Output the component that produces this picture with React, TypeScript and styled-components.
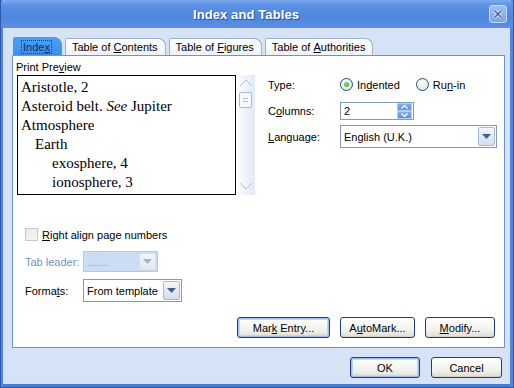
import React from "react";
import styled, { createGlobalStyle } from "styled-components";

const Global = createGlobalStyle`
  html, body { margin: 0; padding: 0; background: #fff; }
  body { font-family: "Liberation Sans", Arial, sans-serif; font-size: 11px; color: #000; }
`;

const Window = styled.div`
  width: 514px;
  height: 388px;
  box-sizing: border-box;
  display: flex;
  flex-direction: column;
  background: #d6e3f7;
  border: 1px solid #2a58b0;
  border-top: none;
  box-shadow: inset 2px 0 0 #5585d8, inset -3px 0 0 #5585d8, inset 0 -3px 0 #4a7bd0;
  overflow: hidden;
`;

const TitleBar = styled.div`
  height: 28px;
  flex: none;
  margin: 0 -1px;
  padding-right: 22px;
  display: flex;
  align-items: center;
  justify-content: center;
  position: relative;
  background: linear-gradient(#7aa8ec 0%, #5a91e6 20%, #4f86df 60%, #5b8fe2 100%);
  border-radius: 6px 6px 0 0;
  color: #fff;
  font-weight: bold;
  font-size: 13px;
  text-shadow: 1px 1px 0 #2c4f94;
  letter-spacing: 0.1px;
`;

const CloseBtn = styled.div`
  position: absolute;
  right: 7px;
  top: 5px;
  width: 18px;
  height: 18px;
  box-sizing: border-box;
  border: 1px solid #c7d9f5;
  border-radius: 3px;
  background: linear-gradient(#9dbff0, #7aa5e6);
  display: flex;
  align-items: center;
  justify-content: center;
`;

const Body = styled.div`
  flex: 1;
  display: flex;
  flex-direction: column;
  padding: 9px 10px 0 11px;
`;

const TabStrip = styled.div`
  display: flex;
  align-items: flex-end;
  height: 18px;
  padding-left: 1px;
  gap: 3px;
`;

const Tab = styled.div<{ $active?: boolean }>`
  height: ${(p) => (p.$active ? "18px" : "17px")};
  box-sizing: border-box;
  padding: 0 ${(p) => (p.$active ? "10px" : "7px")} 0 ${(p) => (p.$active ? "8px" : "6px")};
  display: flex;
  align-items: center;
  border: 1px solid ${(p) => (p.$active ? "#6d8fc5" : "#9bb0d0")};
  border-bottom: none;
  border-radius: 2px 8px 0 0;
  background: ${(p) =>
    p.$active ? "linear-gradient(#4aa0f4, #3a8ee9)" : "linear-gradient(#ffffff, #eef3fb)"};
  color: ${(p) => (p.$active ? "#0d2a6e" : "#000")};
  white-space: nowrap;
`;

const FocusText = styled.span`
  outline: 1px dotted #1d3c80;
  padding: 0 1px;
`;

const U = styled.span`
  text-decoration: underline;
`;

const Panel = styled.div`
  width: 493px;
  height: 293px;
  box-sizing: border-box;
  background: #fff;
  border: 1px solid #6f92c8;
  display: flex;
  flex-direction: column;
  padding: 5px 0 0 3px;
`;

const TopRow = styled.div`
  display: flex;
`;

const PreviewCol = styled.div`
  display: flex;
  flex-direction: column;
  gap: 2px;
`;

const PreviewBox = styled.div`
  display: flex;
  margin-left: 1px;
`;

const PreviewText = styled.div`
  width: 219px;
  height: 120px;
  box-sizing: border-box;
  border: 1px solid #000;
  font-family: "Liberation Serif", "Times New Roman", serif;
  font-size: 15px;
  line-height: 19px;
  padding: 2px 0 0 3px;
  overflow: hidden;
`;

const Entry = styled.div<{ $indent: number }>`
  padding-left: ${(p) => p.$indent}px;
  white-space: nowrap;
`;

const Scroll = styled.div`
  width: 19px;
  height: 120px;
  background: linear-gradient(90deg, #fdfdfe, #eef1f8 60%, #e2e8f5);
  display: flex;
  flex-direction: column;
  align-items: center;
  padding: 4px 0 5px;
  box-sizing: border-box;
`;

const Thumb = styled.div`
  width: 11px;
  height: 14px;
  border: 1px solid #a9b8d6;
  border-radius: 2px;
  background: #f6f8fc;
  display: flex;
  flex-direction: column;
  align-items: center;
  justify-content: center;
  gap: 2px;
  margin-top: 5px;
`;

const Spacer = styled.div`
  flex: 1;
`;

const Grip = styled.div`
  width: 5px;
  height: 1px;
  background: #a9b8d6;
`;

const Options = styled.div`
  display: flex;
  flex-direction: column;
  margin-left: 13px;
  padding-top: 13px;
  gap: 5px;
`;

const OptRow = styled.div`
  display: flex;
  align-items: center;
  height: 21px;
`;

const OptLabel = styled.div`
  width: 72px;
`;

const Radio = styled.div<{ $checked?: boolean }>`
  width: 13px;
  height: 13px;
  box-sizing: border-box;
  border-radius: 50%;
  border: 1px solid #1c5180;
  background: radial-gradient(circle at 35% 35%, #ffffff, #dcdcd5);
  display: flex;
  align-items: center;
  justify-content: center;
  &::after {
    content: "";
    display: ${(p) => (p.$checked ? "block" : "none")};
    width: 5px;
    height: 5px;
    border-radius: 50%;
    background: radial-gradient(circle at 40% 40%, #8ae28a, #22a322);
  }
`;

const RadioItem = styled.div<{ $gap: number }>`
  display: flex;
  align-items: center;
  gap: 4px;
  margin-right: ${(p) => p.$gap}px;
`;

const TextField = styled.div<{ $w: number; $h?: number; $disabled?: boolean }>`
  width: ${(p) => p.$w}px;
  height: ${(p) => p.$h ?? 18}px;
  box-sizing: border-box;
  border: 1px solid ${(p) => (p.$disabled ? "#b8c8e0" : "#7f9db9")};
  background: ${(p) => (p.$disabled ? "#cbdcf3" : "#fff")};
  color: ${(p) => (p.$disabled ? "#8aa0c0" : "#000")};
  display: flex;
  align-items: center;
  padding-left: 3px;
  padding-right: 1px;
`;

const Grow = styled.div`
  flex: 1;
  white-space: nowrap;
`;

const Spinner = styled.div`
  width: 15px;
  height: 16px;
  display: flex;
  flex-direction: column;
`;

const SpinHalf = styled.div`
  flex: 1;
  background: linear-gradient(#82adee, #5f92e2);
  border: 1px solid #b7cdf0;
  display: flex;
  align-items: center;
  justify-content: center;
`;

const DropBtn = styled.div<{ $disabled?: boolean }>`
  width: 17px;
  height: ${(p) => (p.$disabled ? 17 : 19)}px;
  box-sizing: border-box;
  border: 1px solid ${(p) => (p.$disabled ? "#d8e0ec" : "#a9bad6")};
  border-radius: 2px;
  background: ${(p) =>
    p.$disabled ? "linear-gradient(#f3f5f9, #e3e8f0)" : "linear-gradient(#f4f6fb, #d5deed)"};
  display: flex;
  align-items: center;
  justify-content: center;
`;

const Lower = styled.div`
  display: flex;
  flex-direction: column;
  padding-left: 9px;
  margin-top: 30px;
`;

const CheckRow = styled.div`
  display: flex;
  align-items: center;
  gap: 4px;
  height: 19px;
`;

const CheckBox = styled.div`
  width: 13px;
  height: 13px;
  box-sizing: border-box;
  border: 1px solid #c4c9d3;
  background: linear-gradient(135deg, #e6e8ec, #f8f8f8);
`;

const FieldRow = styled.div<{ $disabled?: boolean; $mt: number }>`
  display: flex;
  align-items: center;
  margin-top: ${(p) => p.$mt}px;
  color: ${(p) => (p.$disabled ? "#6f93c4" : "#000")};
`;

const FieldLabel = styled.div`
  width: 58px;
`;

const ButtonRow = styled.div`
  display: flex;
  justify-content: flex-end;
  gap: 10px;
  padding-right: 9px;
  margin-top: auto;
  margin-bottom: 9px;
`;

const Button = styled.div<{ $w: number; $focus?: boolean }>`
  width: ${(p) => p.$w}px;
  height: 21px;
  box-sizing: border-box;
  border: 1px solid #1c3f7a;
  border-radius: 3px;
  background: linear-gradient(#ffffff, #f0f0ea 70%, #dcdcd4);
  box-shadow: ${(p) =>
    p.$focus ? "inset 0 0 0 1px #9ebdf2, inset 0 0 0 2px #c4d6f6" : "inset 0 -1px 0 #d6d0c4"};
  display: flex;
  align-items: center;
  justify-content: center;
  white-space: nowrap;
`;

const Footer = styled.div`
  display: flex;
  justify-content: flex-end;
  gap: 11px;
  padding: 9px 1px 0 0;
`;

const DownTri = ({ color = "#3f5f96" }: { color?: string }) => (
  <svg width="9" height="5" viewBox="0 0 9 5">
    <path d="M0 0 H9 L4.5 5 Z" fill={color} />
  </svg>
);

const Chevron = ({ up }: { up?: boolean }) => (
  <svg width="7" height="4" viewBox="0 0 7 4">
    <path d={up ? "M0.5 3.5 L3.5 0.5 L6.5 3.5" : "M0.5 0.5 L3.5 3.5 L6.5 0.5"} stroke="#fff" strokeWidth="1.3" fill="none" />
  </svg>
);

const ScrollArrow = ({ up }: { up?: boolean }) => (
  <svg width="14" height="8" viewBox="0 0 14 8">
    <path d={up ? "M1 7 L7 1 L13 7" : "M1 1 L7 7 L13 1"} stroke="#b5c0d6" strokeWidth="1" fill="none" />
  </svg>
);

export default function App() {
  return (
    <>
      <Global />
      <Window>
        <TitleBar>
          Index and Tables
          <CloseBtn>
            <svg width="10" height="10" viewBox="0 0 10 10">
              <path d="M1.5 1.5 L8.5 8.5 M8.5 1.5 L1.5 8.5" stroke="#fff" strokeWidth="3" />
              <path d="M1.5 1.5 L8.5 8.5 M8.5 1.5 L1.5 8.5" stroke="#3b5f9e" strokeWidth="1.6" />
            </svg>
          </CloseBtn>
        </TitleBar>
        <Body>
          <TabStrip>
            <Tab $active>
              <FocusText>
                Inde<U>x</U>
              </FocusText>
            </Tab>
            <Tab>
              Table of&nbsp;<U>C</U>ontents
            </Tab>
            <Tab>
              Table of&nbsp;<U>F</U>igures
            </Tab>
            <Tab>
              Table of&nbsp;<U>A</U>uthorities
            </Tab>
          </TabStrip>
          <Panel>
            <TopRow>
              <PreviewCol>
                <div>
                  Print Pre<U>v</U>iew
                </div>
                <PreviewBox>
                  <PreviewText>
                    <Entry $indent={0}>Aristotle, 2</Entry>
                    <Entry $indent={0}>
                      Asteroid belt. <i>See</i> Jupiter
                    </Entry>
                    <Entry $indent={0}>Atmosphere</Entry>
                    <Entry $indent={14}>Earth</Entry>
                    <Entry $indent={31}>exosphere, 4</Entry>
                    <Entry $indent={31}>ionosphere, 3</Entry>
                  </PreviewText>
                  <Scroll>
                    <ScrollArrow up />
                    <Thumb>
                      <Grip />
                      <Grip />
                    </Thumb>
                    <Spacer />
                    <ScrollArrow />
                  </Scroll>
                </PreviewBox>
              </PreviewCol>
              <Options>
                <OptRow>
                  <OptLabel>Type:</OptLabel>
                  <RadioItem $gap={16}>
                    <Radio $checked />
                    <span>
                      In<U>d</U>ented
                    </span>
                  </RadioItem>
                  <RadioItem $gap={0}>
                    <Radio />
                    <span>
                      Ru<U>n</U>-in
                    </span>
                  </RadioItem>
                </OptRow>
                <OptRow>
                  <OptLabel>
                    C<U>o</U>lumns:
                  </OptLabel>
                  <TextField $w={74}>
                    <Grow>2</Grow>
                    <Spinner>
                      <SpinHalf>
                        <Chevron up />
                      </SpinHalf>
                      <SpinHalf>
                        <Chevron />
                      </SpinHalf>
                    </Spinner>
                  </TextField>
                </OptRow>
                <OptRow>
                  <OptLabel>
                    <U>L</U>anguage:
                  </OptLabel>
                  <TextField $w={157} $h={23}>
                    <Grow>English (U.K.)</Grow>
                    <DropBtn>
                      <DownTri />
                    </DropBtn>
                  </TextField>
                </OptRow>
              </Options>
            </TopRow>
            <Lower>
              <CheckRow>
                <CheckBox />
                <span>
                  <U>R</U>ight align page numbers
                </span>
              </CheckRow>
              <FieldRow $disabled $mt={7}>
                <FieldLabel>Tab leader:</FieldLabel>
                <TextField $w={75} $h={21} $disabled>
                  <Grow>.......</Grow>
                  <DropBtn $disabled>
                    <DownTri color="#a8b4c8" />
                  </DropBtn>
                </TextField>
              </FieldRow>
              <FieldRow $mt={7}>
                <FieldLabel>
                  Forma<U>t</U>s:
                </FieldLabel>
                <TextField $w={99} $h={23}>
                  <Grow>From template</Grow>
                  <DropBtn>
                    <DownTri />
                  </DropBtn>
                </TextField>
              </FieldRow>
            </Lower>
            <ButtonRow>
              <Button $w={93} $focus>
                Mar<U>k</U>&nbsp;Entry...
              </Button>
              <Button $w={75}>
                A<U>u</U>toMark...
              </Button>
              <Button $w={70}>
                <U>M</U>odify...
              </Button>
            </ButtonRow>
          </Panel>
          <Footer>
            <Button $w={70} $focus>
              OK
            </Button>
            <Button $w={71}>Cancel</Button>
          </Footer>
        </Body>
      </Window>
    </>
  );
}
